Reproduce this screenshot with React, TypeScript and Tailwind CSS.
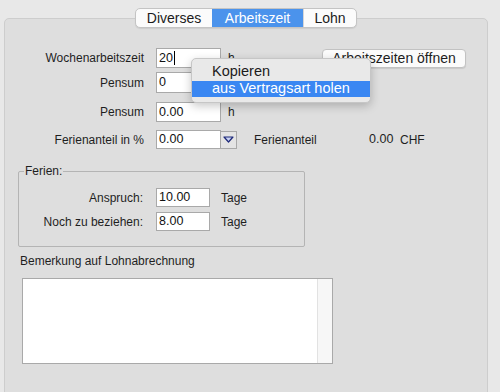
import React from 'react';

const font = { fontFamily: '"Liberation Sans", Arial, sans-serif' };

const Field = ({ value, w, h, caret }: { value: string; w: string; h: string; caret?: boolean }) => (
  <div className={`${w} ${h} bg-white border border-[#a9a9a9] flex items-center pl-[2px] text-[12.5px] text-[#111] shrink-0`}>
    <span>{value}</span>
    {caret && <span className="w-px h-[14px] bg-black ml-px" />}
  </div>
);

export default function App() {
  return (
    <div className="w-[500px] h-[392px] overflow-hidden bg-[#e8e8e8] pt-2 pl-1 relative text-[#1e1e1e] text-[12px]" style={font}>
      <div className="w-[484px]">
        {/* tabs */}
        <div className="flex justify-center relative z-10">
          <div className="flex h-[20px] rounded-[5px] border border-[#c4c4c4] bg-[#fbfbfb] overflow-hidden text-[14px] shadow-[0_1px_1px_rgba(0,0,0,0.08)]">
            <div className="w-[76px] flex items-center justify-center text-[#1b1b1b]">Diverses</div>
            <div className="w-[91px] flex items-center justify-center bg-[#4b93ec] text-white">Arbeitszeit</div>
            <div className="w-[53px] flex items-center justify-center border-l border-[#d6d6d6] text-[#1b1b1b]">Lohn</div>
          </div>
        </div>

        {/* panel */}
        <div className="-mt-[10px] h-[400px] rounded-[5px] border border-[#cdcdcd] bg-[#dedede] pt-[29px]">
          <div className="flex items-center h-[20px]">
            <div className="w-[139px] text-right">Wochenarbeitszeit</div>
            <div className="ml-[12px]"><Field value="20" w="w-[65px]" h="h-[20px]" caret /></div>
            <div className="ml-[7px] w-[94px]">h</div>
            <div className="w-[144px] h-[19px] rounded-[4px] border border-[#c2c2c2] bg-[#fbfbfb] flex items-center justify-center text-[14px] shadow-[0_1px_1px_rgba(0,0,0,0.1)]">
              Arbeitszeiten öffnen
            </div>
          </div>

          <div className="flex items-center h-[21px] mt-[4px]">
            <div className="w-[139px] text-right">Pensum</div>
            <div className="ml-[12px]"><Field value="0" w="w-[65px]" h="h-[21px]" /></div>
          </div>

          <div className="flex items-center h-[20px] mt-[9px]">
            <div className="w-[139px] text-right">Pensum</div>
            <div className="ml-[12px]"><Field value="0.00" w="w-[65px]" h="h-[20px]" /></div>
            <div className="ml-[7px]">h</div>
          </div>

          <div className="flex items-center h-[19px] mt-[8px]">
            <div className="w-[139px] text-right">Ferienanteil in %</div>
            <div className="ml-[12px]"><Field value="0.00" w="w-[65px]" h="h-[19px]" /></div>
            <div className="w-[16px] h-[18px] border border-l-0 border-[#a9a9a9] bg-[#e4e4e4] flex items-center justify-center">
              <svg width="11" height="7" viewBox="0 0 11 7">
                <path d="M1 1 L10 1 L5.5 6 Z" fill="#c9d2f2" stroke="#1f2a7a" strokeWidth="1.2" strokeLinejoin="round" />
              </svg>
            </div>
            <div className="ml-[17px] w-[115px]">Ferienanteil</div>
            <div className="w-[31px] text-[12.5px]">0.00</div>
            <div>CHF</div>
          </div>

          {/* Ferien group */}
          <div className="ml-[13px] mt-[22px] w-[287px] h-[76px] border border-[#b4b4b4] rounded-[2px] relative pt-[16px]">
            <span className="absolute -top-[8px] left-[5px] px-[1px] bg-[#dedede] leading-[14px]">Ferien:</span>
            <div className="flex items-center h-[19px]">
              <div className="w-[124px] text-right">Anspruch:</div>
              <div className="ml-[13px]"><Field value="10.00" w="w-[54px]" h="h-[19px]" /></div>
              <div className="ml-[11px]">Tage</div>
            </div>
            <div className="flex items-center h-[19px] mt-[5px]">
              <div className="w-[124px] text-right">Noch zu beziehen:</div>
              <div className="ml-[13px]"><Field value="8.00" w="w-[54px]" h="h-[19px]" /></div>
              <div className="ml-[11px]">Tage</div>
            </div>
          </div>

          <div className="ml-[15px] mt-[7px] leading-[14px]">Bemerkung auf Lohnabrechnung</div>
          <div className="ml-[17px] mt-[10px] w-[311px] h-[86px] border border-[#a9a9a9] bg-white flex justify-end">
            <div className="w-[15px] h-full border-l border-[#e2e2e2] bg-[#f7f7f7]" />
          </div>
        </div>
      </div>

      {/* context menu */}
      <div className="absolute left-[191px] top-[58px] w-[180px] h-[45px] rounded-[5px] border border-[#c6c6c6] bg-[#e9e9e9] shadow-[0_3px_10px_rgba(0,0,0,0.22)] pt-[4px] text-[14.5px]">
        <div className="h-[18px] flex items-center pl-[20px] text-[#1b1b1b]">Kopieren</div>
        <div className="h-[16px] flex items-center pl-[20px] bg-[#3a87f2] text-white">aus Vertragsart holen</div>
      </div>
    </div>
  );
}
